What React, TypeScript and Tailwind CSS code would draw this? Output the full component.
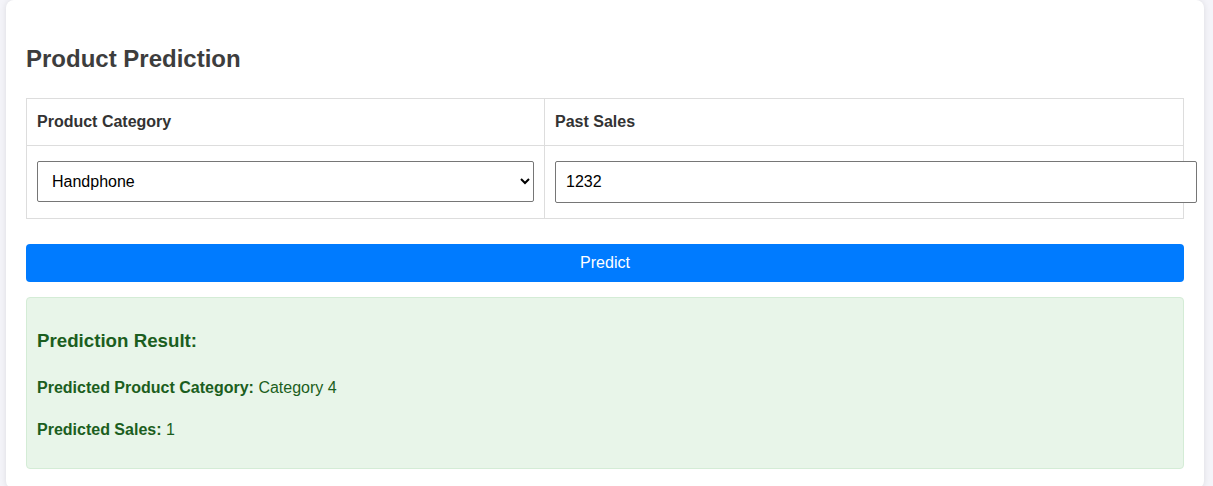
import { useState } from 'react';

export default function App() {
  const [category, setCategory] = useState('Handphone');
  const [sales, setSales] = useState('1232');

  return (
    <div className="min-h-screen bg-[#f4f4f9] font-['Liberation_Sans',Arial,sans-serif] text-[#333]">
      <div className="ml-[6px] w-[1198px] rounded-lg bg-white px-[20px] pt-[45px] pb-[20px] shadow-[0_0_6px_rgba(0,0,0,0.1)]">
        {/* Title */}
        <h2 className="text-[24px] leading-[28px] font-bold text-[#3d3d3d]">Product Prediction</h2>

        {/* Form table */}
        <div className="mt-[25px] border border-[#ddd]">
          <div className="grid grid-cols-[518px_1fr] border-b border-[#ddd]">
            <div className="flex h-[46px] items-center border-r border-[#ddd] px-[10px] text-[16px] font-bold">
              Product Category
            </div>
            <div className="flex h-[46px] items-center px-[10px] text-[16px] font-bold">Past Sales</div>
          </div>
          <div className="grid grid-cols-[518px_1fr]">
            <div className="h-[72px] border-r border-[#ddd] px-[10px] pt-[15px]">
              <select
                value={category}
                onChange={(e) => setCategory(e.target.value)}
                className="h-[41px] w-full rounded-[2px] border border-[#767676] bg-white px-[10px] text-[16px] text-black"
              >
                <option>Handphone</option>
                <option>Laptop</option>
                <option>Tablet</option>
                <option>Accessories</option>
              </select>
            </div>
            <div className="h-[72px] px-[10px] pt-[15px]">
              <input
                type="text"
                value={sales}
                onChange={(e) => setSales(e.target.value)}
                className="h-[42px] w-[642px] rounded-[2px] border border-[#767676] bg-white px-[10px] text-[16px] text-black outline-none"
              />
            </div>
          </div>
        </div>

        {/* Submit */}
        <button className="mt-[25px] h-[38px] w-full rounded-[4px] bg-[#007bff] text-[16px] text-white">Predict</button>

        {/* Result */}
        <div className="mt-[15px] rounded-[4px] border border-[#d4ecd6] bg-[#e8f5e9] px-[10px] pt-[32px] pb-[29px] text-[#1b5e20]">
          <h3 className="text-[18.72px] leading-[22px] font-bold">Prediction Result:</h3>
          <p className="mt-[27px] text-[16px] leading-[18px]">
            <span className="font-bold">Predicted Product Category:</span> Category 4
          </p>
          <p className="mt-[24px] text-[16px] leading-[18px]">
            <span className="font-bold">Predicted Sales:</span> 1
          </p>
        </div>
      </div>
    </div>
  );
}
